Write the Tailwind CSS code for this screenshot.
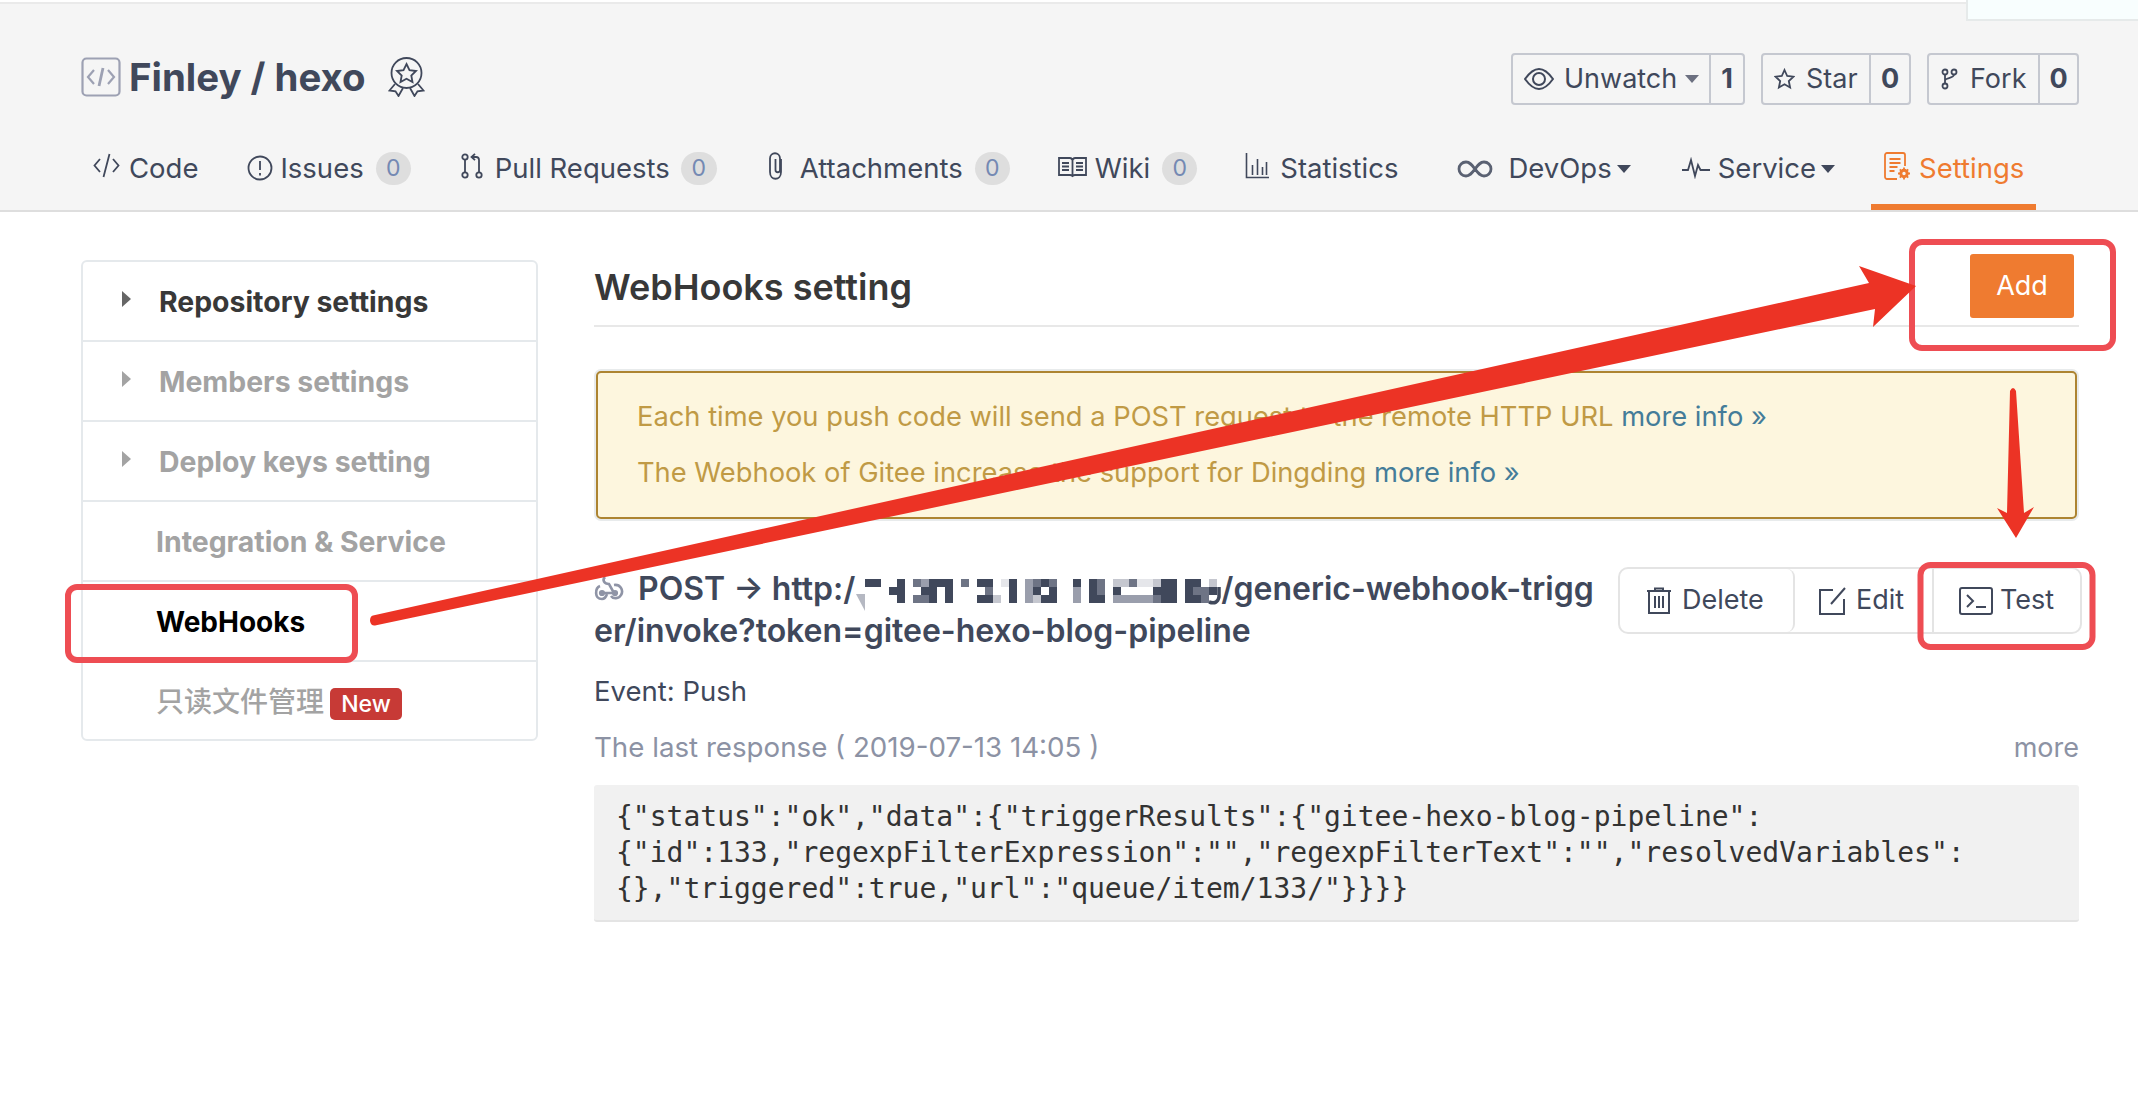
<!DOCTYPE html>
<html lang="en">
<head>
    <meta charset="UTF-8">
    <title>WebHooks setting</title>
    <script src="https://cdn.jsdelivr.net/npm/@tailwindcss/browser@4"></script>
</head>
<body class="relative w-[2138px] h-[1100px] overflow-hidden bg-white text-[#40485b] font-['Inter','Noto_Sans_CJK_SC',sans-serif]">

    <!-- corner of the box above the header -->
    <div class="absolute top-0 right-0 w-[172px] h-[21px] bg-[#f8fefe] border-l-2 border-b-2 border-[#e6eaea] z-10"></div>

    <!-- repo header -->
    <header class="mt-[2px] h-[210px] bg-[#f5f5f5] border-t-2 border-b-2 border-t-[#eaeaea] border-b-[#dedede] pl-[81px] pr-[59px]">
        <div class="flex items-center justify-between h-[102px] pt-[48px]">
            <div class="flex items-center mb-[4px]">
                <svg class="w-[40px] h-[40px] mr-[8px]" viewBox="0 0 40 40" fill="none" stroke="#9da1b3" stroke-width="2.200"><rect x="1.500" y="1.500" width="37" height="37" rx="4"/><path d="M13 13l-6 7 6 7M27 13l6 7-6 7"/><path stroke-width="2.800" d="M22 11l-4 18"/></svg>
                <h1 class="text-[38.400px] font-bold leading-none">Finley / hexo</h1>
                <svg class="w-[37px] h-[40px] ml-[22px]" viewBox="0 0 37 40" fill="none" stroke="#40485b" stroke-width="1.800"><circle cx="18.500" cy="16" r="15"/><path d="M18.500 7l3 6.200 6.500.8-4.700 4.500 1.200 6.500-6-3.200-6 3.200 1.200-6.500L9 14l6.500-.8z"/><path d="M7 27l-5.500 6.500 6 .8 3 4.700 4.500-8M30 27l5.500 6.500-6 .8-3 4.700-4.500-8"/></svg>
            </div>
            <div class="flex gap-[16px] text-[27px]">
                <div class="flex items-center h-[52px] w-[234px] border-2 border-[#c5c8d0] rounded-[4px]">
                    <div class="flex items-center w-[198px] pl-[11px] border-r-2 border-[#c5c8d0] h-full">
                        <svg class="w-[30px] h-[22px] mr-[10px]" viewBox="0 0 30 22" fill="none" stroke="#40485b" stroke-width="2"><path d="M1 11C6 4 10 1 15 1s9 3 14 10c-5 7-9 10-14 10S6 18 1 11z"/><circle cx="15" cy="11" r="6"/></svg>
                        <span>Unwatch</span>
                        <span class="ml-[8px] w-0 h-0 border-x-[7px] border-t-[8px] border-x-transparent border-t-[#6c7080]"></span>
                    </div>
                    <span class="flex-1 text-center font-bold">1</span>
                </div>
                <div class="flex items-center h-[52px] w-[150px] border-2 border-[#c5c8d0] rounded-[4px]">
                    <div class="flex items-center w-[108px] pl-[11px] border-r-2 border-[#c5c8d0] h-full">
                        <svg class="w-[21px] h-[22px] mr-[11px]" viewBox="0 0 21 22" fill="none" stroke="#40485b" stroke-width="1.800"><path d="M10.500 2l2.700 6 6.300.7-4.700 4.300 1.300 6.500-5.600-3.300-5.600 3.300 1.300-6.500L1.500 8.700 7.800 8z"/></svg>
                        <span>Star</span>
                    </div>
                    <span class="flex-1 text-center font-bold">0</span>
                </div>
                <div class="flex items-center h-[52px] w-[152px] border-2 border-[#c5c8d0] rounded-[4px]">
                    <div class="flex items-center w-[111px] pl-[12px] border-r-2 border-[#c5c8d0] h-full">
                        <svg class="w-[17px] h-[22px] mr-[12px]" viewBox="0 0 17 22" fill="none" stroke="#40485b" stroke-width="1.800"><circle cx="4" cy="4" r="2.500"/><circle cx="13" cy="4" r="2.500"/><circle cx="4" cy="18" r="2.500"/><path d="M4 6.500v9M13 6.500c0 4-9 3-9 6"/></svg>
                        <span>Fork</span>
                    </div>
                    <span class="flex-1 text-center font-bold">0</span>
                </div>
            </div>
        </div>

        <!-- tabs -->
        <nav class="flex items-center h-[104px] pt-[21px] pl-[12px] text-[27.500px]">
            <a class="flex items-center">
                <svg class="w-[27px] h-[25px] mr-[9px] mb-[6px]" viewBox="0 0 27 25" fill="none" stroke="#40485b" stroke-width="1.800"><path d="M7 6L1.500 12.500 7 19M20 6l5.500 6.500L20 19M16.500 1l-6 23"/></svg>
                <span>Code</span>
            </a>
            <a class="flex items-center ml-[49px]">
                <svg class="w-[26px] h-[26px] mr-[7px] mb-[2px]" viewBox="0 0 26 26" fill="none" stroke="#40485b" stroke-width="1.800"><circle cx="13" cy="13" r="11.500"/><path d="M13 6v9M13 18v2.500"/></svg>
                <span>Issues</span>
                <span class="ml-[12px] w-[35px] h-[33px] rounded-full bg-[#dedede] text-[#7489b3] text-[23px] flex items-center justify-center">0</span>
            </a>
            <a class="flex items-center ml-[50px]">
                <svg class="w-[22px] h-[26px] mr-[12px] mb-[6px]" viewBox="0 0 22 26" fill="none" stroke="#40485b" stroke-width="1.800"><circle cx="4" cy="4" r="2.700"/><circle cx="4" cy="22" r="2.700"/><circle cx="18" cy="22" r="2.700"/><path d="M4 6.700v12.600M18 19.300V7c0-2-1-3-3-3h-4M14 .800L10.500 4l3.500 3.200"/></svg>
                <span>Pull Requests</span>
                <span class="ml-[11px] w-[36px] h-[33px] rounded-full bg-[#dedede] text-[#7489b3] text-[23px] flex items-center justify-center">0</span>
            </a>
            <a class="flex items-center ml-[51px]">
                <svg class="w-[17px] h-[28px] mr-[15px] mb-[6px]" viewBox="0 0 17 28" fill="none" stroke="#40485b" stroke-width="1.800"><path d="M13 7v13c0 9-11 9-11 0V6.500c0-7 10-7 10 0V18c0 3-4.500 3-4.500 0V7"/></svg>
                <span>Attachments</span>
                <span class="ml-[12px] w-[35px] h-[33px] rounded-full bg-[#dedede] text-[#7489b3] text-[23px] flex items-center justify-center">0</span>
            </a>
            <a class="flex items-center ml-[48px]">
                <svg class="w-[29px] h-[22px] mr-[8px] mb-[4px]" viewBox="0 0 29 22" fill="none" stroke="#40485b" stroke-width="1.800"><path d="M1 2h11c1 0 2 1 2.500 2 .5-1 1.500-2 2.500-2h11v17H17c-1 0-2 .5-2.500 1-.5-.5-1.500-1-2.500-1H1zM14.500 4v16M4 7h7M4 10.500h7M4 14h7M18 7h7M18 10.500h7M18 14h7"/></svg>
                <span>Wiki</span>
                <span class="ml-[12px] w-[35px] h-[33px] rounded-full bg-[#dedede] text-[#7489b3] text-[23px] flex items-center justify-center">0</span>
            </a>
            <a class="flex items-center ml-[48px]">
                <svg class="w-[24px] h-[26px] mr-[11px] mb-[6px]" viewBox="0 0 24 26" fill="none" stroke="#40485b" stroke-width="1.600"><path d="M1.500 0v24.500H24M7.500 12v10M12.500 6v16M17.500 14v8M21.500 9v13"/></svg>
                <span>Statistics</span>
            </a>
            <a class="flex items-center ml-[58px]">
                <svg class="w-[36px] h-[18px] mr-[16px]" viewBox="0 0 36 18" fill="none" stroke="#5a6172" stroke-width="2.800"><path d="M18 9c-3-4-5-7-9-7a7 7 0 0 0 0 14c4 0 6-3 9-7s5-7 9-7a7 7 0 0 1 0 14c-4 0-6-3-9-7z"/></svg>
                <span>DevOps</span>
                <span class="ml-[5px] w-0 h-0 border-x-[7px] border-t-[8px] border-x-transparent border-t-[#40485b]"></span>
            </a>
            <a class="flex items-center ml-[51px]">
                <svg class="w-[28px] h-[22px] mr-[8px] mb-[2px]" viewBox="0 0 28 22" fill="none" stroke="#40485b" stroke-width="1.800"><path d="M0 13h6l3-10 4 16 3-11 2.500 5h9.500"/></svg>
                <span>Service</span>
                <span class="ml-[5px] w-0 h-0 border-x-[7px] border-t-[8px] border-x-transparent border-t-[#40485b]"></span>
            </a>
            <a class="relative flex items-center ml-[49px] text-[#ef7b30]">
                <svg class="w-[27px] h-[28px] mr-[8px] mb-[6px]" viewBox="0 0 27 28" fill="none" stroke="#ef7b30" stroke-width="1.800"><path d="M13 27H3c-1 0-2-1-2-2V3c0-1 1-2 2-2h16c1 0 2 1 2 2v11M5.500 7h11M5.500 11h11M5.500 15h8M5.500 19h5"/><circle cx="20" cy="21.500" r="3.200" stroke-width="3"/><path stroke-width="1.800" d="M20 15.500v2.500M20 25v2.500M14 21.500h2.500M23.500 21.500H26M15.800 17.300l1.800 1.800M22.400 23.900l1.800 1.800M24.200 17.300l-1.800 1.800M17.600 23.900l-1.800 1.800"/></svg>
                <span>Settings</span>
                <span class="absolute -left-[13px] -right-[12px] top-[56px] h-[6px] bg-[#ef7b30]"></span>
            </a>
        </nav>
    </header>

    <div class="flex pl-[81px] pr-[59px] pt-[48px]">
        <!-- settings sidebar -->
        <aside class="w-[457px] h-[481px] border-2 border-[#e5e9ec] rounded-[6px] flex flex-col text-[28.400px] font-bold text-[#a3a3a3] shrink-0">
            <div class="h-[80px] pt-[2px] flex items-center pl-[39px] border-b-2 border-[#e5e9ec] text-[#383838]">
                <span class="w-0 h-0 mb-[6px] border-y-[8px] border-l-[9px] border-y-transparent border-l-[#666666]"></span>
                <span class="ml-[28px]">Repository settings</span>
            </div>
            <div class="h-[80px] pt-[2px] flex items-center pl-[39px] border-b-2 border-[#e5e9ec]">
                <span class="w-0 h-0 mb-[6px] border-y-[8px] border-l-[9px] border-y-transparent border-l-[#a3a3a3]"></span>
                <span class="ml-[28px]">Members settings</span>
            </div>
            <div class="h-[80px] pt-[2px] flex items-center pl-[39px] border-b-2 border-[#e5e9ec]">
                <span class="w-0 h-0 mb-[6px] border-y-[8px] border-l-[9px] border-y-transparent border-l-[#a3a3a3]"></span>
                <span class="ml-[28px]">Deploy keys setting</span>
            </div>
            <div class="h-[80px] pt-[2px] flex items-center pl-[73px] border-b-2 border-[#e5e9ec]">Integration &amp; Service</div>
            <div class="h-[80px] pt-[2px] flex items-center pl-[73px] border-b-2 border-[#e5e9ec] text-black text-[28px]">WebHooks</div>
            <div class="flex-1 pt-[3px] flex items-center pl-[73px] font-medium text-[28px]">
                <span>只读文件管理</span>
                <span class="ml-[6px] mt-[4px] h-[32px] w-[72px] rounded-[5px] bg-[#c73a36] text-white text-[23px] font-medium flex items-center justify-center">New</span>
            </div>
        </aside>

        <!-- webhook list -->
        <main class="flex-1 ml-[56px]">
            <div class="flex items-center justify-between h-[74px] pr-[5px] -mt-[7px] border-b-2 border-[#e8e8e8]">
                <h2 class="text-[36px] font-semibold text-[#383838] -mt-[5px]">WebHooks setting</h2>
                <button class="w-[104px] h-[64px] pt-[2px] -mt-[7px] bg-[#ef7b30] text-white text-[27px] rounded-[3px]">Add</button>
            </div>

            <div class="mt-[44px] mx-[2px] h-[148px] border-2 border-[#ad8431] rounded-[5px] bg-[#fdf6de] ring-2 ring-[#e8ebec] pl-[39px] pt-[16px] text-[27.300px] leading-[56px] text-[#c09a45]">
                <p>Each time you push code will send a POST request to the remote HTTP URL <a class="text-[#447c99]">more info »</a></p>
                <p>The Webhook of Gitee increase the support for Dingding <a class="text-[#447c99]">more info »</a></p>
            </div>

            <div class="flex items-start justify-between mt-[49px]">
                <h3 class="w-[1006px] text-[32px] font-semibold leading-[42px] break-all">
                    <svg class="inline w-[30px] h-[26px] mb-[6px] mr-[14px]" viewBox="0 0 30 26" fill="none" stroke="#8f94a6" stroke-width="2.600"><path d="M11 2c-3 3-1 7 4 7l5 9H9"/><path d="M6 11c-5 2-6 13 2 13 2.500 0 4-2 5-5"/><path d="M20 10c6-1 10 5 7 10-2 4-8 4-10 1"/><circle cx="8" cy="18" r="1.800" fill="#8f94a6"/><circle cx="21" cy="18" r="1.800" fill="#8f94a6"/></svg>POST → http:/<svg class="inline w-[366px] h-[40px] -mb-[8px] overflow-visible" viewBox="0 0 366 40" fill="none" stroke-width="8">
                        <path stroke="#40485b" d="M10 8h16M42 8h8M74 8h24M122 8h16M154 8h8M186 8h8M218 8h8M234 8h8M306 8h16M330 8h16M34 16h16M66 16h16M90 16h8M154 16h8M178 16h8M194 16h8M234 16h8M258 16h8M298 16h24M330 16h8M354 16h8M42 24h8M74 24h8M90 24h8M122 24h16M154 24h8M186 24h16M234 24h16M306 24h16M330 24h16"/>
                        <path stroke="#6e7485" d="M58 8h8M106 8h8M178 8h8M194 8h8M242 8h8M274 8h8M130 16h8M242 16h8M338 16h16M58 24h16M346 24h8M298 24h8"/>
                        <path stroke="#9a9eac" d="M66 8h8M170 8h8M170 16h8M218 16h8M170 24h8M218 24h8M258 24h40"/>
                        <path stroke="#c5c7cf" d="M258 8h16M298 8h8M354 8h8M138 24h8M178 24h8"/>
                        <path stroke="#e5e6ea" d="M146 8h8M282 8h16"/>
                        <path fill="#b5b8c2" stroke="none" d="M1 19h9v17z"/>
                        <path stroke="#40485b" stroke-width="3.500" d="M354 27c6 2 9 0 10-5V12"/>
                    </svg>/generic-webhook-trigger/invoke?token=gitee-hexo-blog-pipeline
                </h3>
                <div class="flex h-[67px] w-[464px] mr-[-3px] -mt-[1px] border-2 border-[#e4e4e4] rounded-[10px] text-[27px]">
                    <div class="w-[175px] flex items-center pl-[26px] border-r-2 border-[#e4e4e4] rounded-r-[8px]">
                        <svg class="w-[26px] h-[28px] mr-[10px]" viewBox="0 0 26 28" fill="none" stroke="#40485b" stroke-width="2"><path d="M1 4h24M9 4V1.500h8V4M3 4v22h20V4M9 9v12M13 9v12M17 9v12"/></svg>
                        <span>Delete</span>
                    </div>
                    <div class="w-[139px] flex items-center pl-[24px] border-r-2 border-[#e4e4e4]">
                        <svg class="w-[27px] h-[28px] mr-[10px]" viewBox="0 0 27 28" fill="none" stroke="#40485b" stroke-width="2"><path d="M14 3H1v24h24V12M26 1L12 17"/></svg>
                        <span>Edit</span>
                    </div>
                    <div class="flex-1 flex items-center pl-[25px]">
                        <svg class="w-[34px] h-[28px] mr-[7px]" viewBox="0 0 34 28" fill="none" stroke="#40485b" stroke-width="2"><rect x="1" y="1" width="32" height="26" rx="2"/><path d="M8 8l6 6-6 6M17 20h10"/></svg>
                        <span>Test</span>
                    </div>
                </div>
            </div>

            <p class="mt-[17px] text-[27.500px] leading-[44px]">Event: Push</p>
            <div class="flex justify-between items-baseline mt-[12px] leading-[44px] text-[#8c92a4]">
                <span class="text-[27.700px]">The last response ( 2019-07-13 14:05 )</span>
                <a class="text-[27px]">more</a>
            </div>
            <pre class="mt-[15px] h-[137px] bg-[#f1f1f1] border-b-2 border-[#e4e4e4] rounded-[3px] pl-[22px] pt-[14px] font-['DejaVu_Sans_Mono',monospace] text-[28px] leading-[36px] text-[#333333]">{"status":"ok","data":{"triggerResults":{"gitee-hexo-blog-pipeline":
{"id":133,"regexpFilterExpression":"","regexpFilterText":"","resolvedVariables":
{},"triggered":true,"url":"queue/item/133/"}}}}</pre>
        </main>
    </div>

    <!-- red annotations drawn over the page -->
    <svg class="absolute inset-0 z-20 pointer-events-none" width="2138" height="1100" viewBox="0 0 2138 1100" fill="none">
        <rect x="68" y="587" width="287" height="73" rx="9" stroke="#ee4d53" stroke-width="6"/>
        <rect x="1912" y="242" width="201" height="106" rx="10" stroke="#ee4d53" stroke-width="6"/>
        <rect x="1920.500" y="565" width="172" height="82" rx="10" stroke="#ee4d53" stroke-width="6"/>
        <path fill="#ec3325" d="M373 615.500L1869 283 1859 266 1916 286 1873 327 1875 309 375 625.500Q371 626 370 621 370 616 373 615.500z"/>
        <path fill="#ec3325" d="M2010 391Q2013 385 2016 391L2024 513 2034 507 2016 538 1997 508 2007 513z"/>
    </svg>
</body>
</html>
